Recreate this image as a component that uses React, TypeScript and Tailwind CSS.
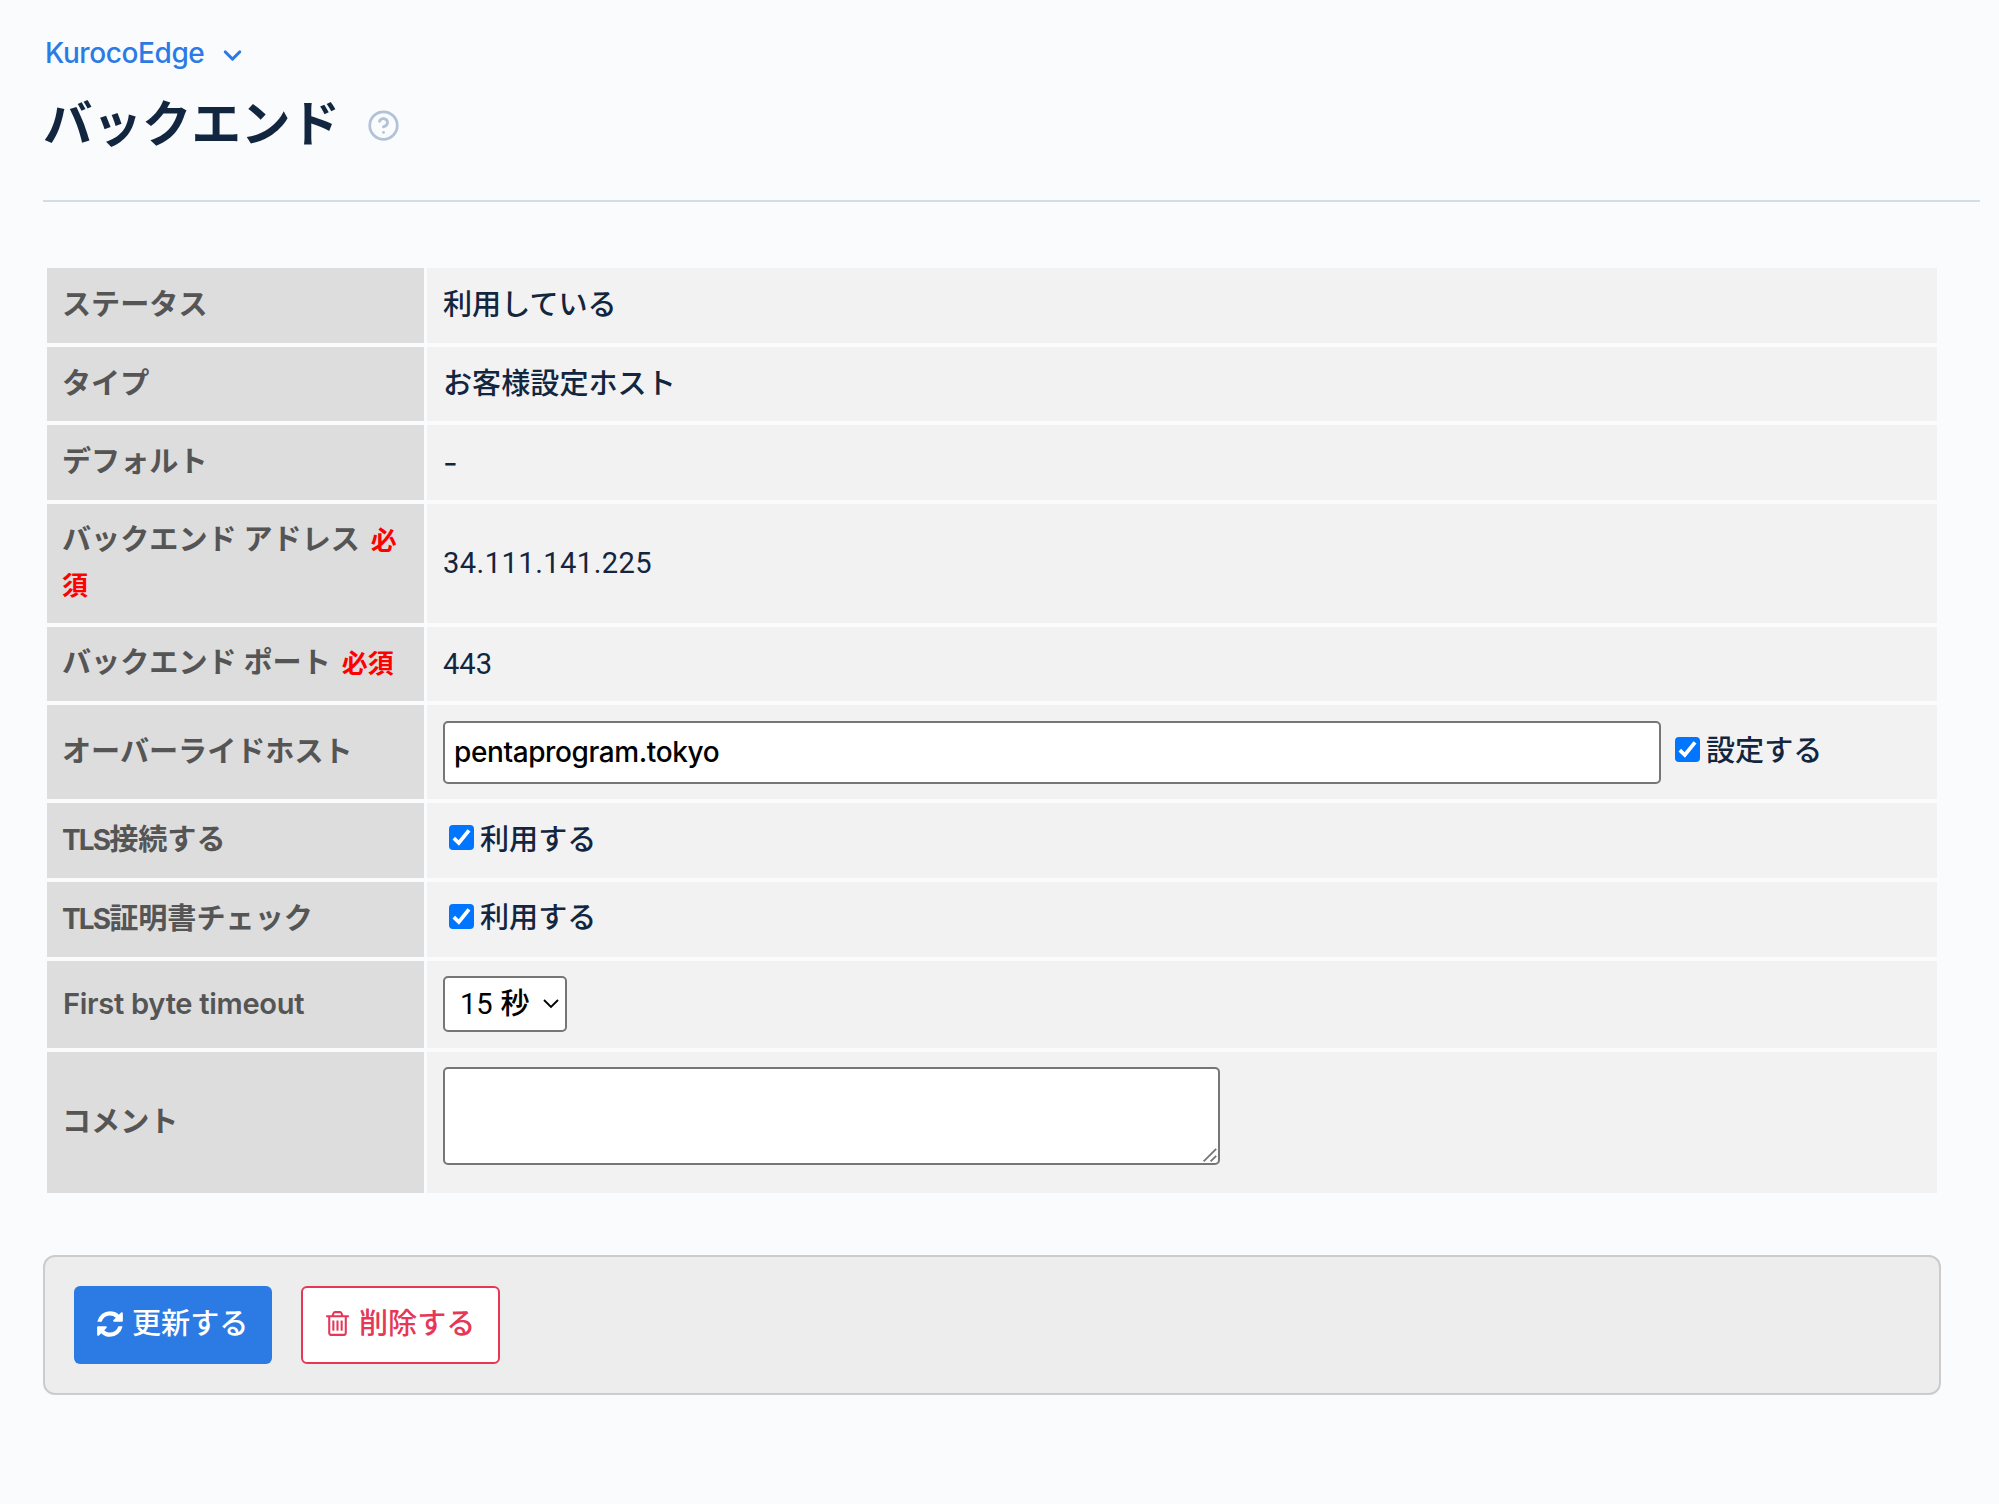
import type { ReactNode } from "react";
import { ChevronDown, CircleHelp } from "lucide-react";

const RefreshIcon = () => (
  <svg viewBox="0 0 1792 1792" className="size-[30px]" fill="currentColor">
    <path d="M1639 1056q0 5-1 7-64 268-268 434.5t-478 166.5q-146 0-282.5-55t-243.5-157l-129 129q-19 19-45 19t-45-19-19-45v-448q0-26 19-45t45-19h448q26 0 45 19t19 45-19 45l-137 137q71 66 161 102t187 36q134 0 250-65t186-179q11-17 53-117 8-23 30-23h192q13 0 22.5 9.5t9.5 22.5zm25-800v448q0 26-19 45t-45 19h-448q-26 0-45-19t-19-45 19-45l138-138q-148-137-349-137-134 0-250 65t-186 179q-11 17-53 117-8 23-30 23h-199q-13 0-22.5-9.5t-9.5-22.5v-7q65-268 270-434.5t480-166.5q146 0 284 55.5t245 156.5l130-129q19-19 45-19t45 19 19 45z" />
  </svg>
);

const TrashIcon = () => (
  <svg viewBox="0 0 1792 1792" className="size-[29px]" fill="currentColor">
    <path d="M704 736v576q0 14-9 23t-23 9h-64q-14 0-23-9t-9-23v-576q0-14 9-23t23-9h64q14 0 23 9t9 23zm256 0v576q0 14-9 23t-23 9h-64q-14 0-23-9t-9-23v-576q0-14 9-23t23-9h64q14 0 23 9t9 23zm256 0v576q0 14-9 23t-23 9h-64q-14 0-23-9t-9-23v-576q0-14 9-23t23-9h64q14 0 23 9t9 23zm128 724v-948h-896v948q0 22 7 40.5t14.5 27 10.5 8.5h832q3 0 10.5-8.5t14.5-27 7-40.5zm-672-1076h448l-48-117q-7-9-17-11h-317q-10 2-17 11zm928 32v64q0 14-9 23t-23 9h-96v948q0 83-47 143.5t-113 60.5h-832q-66 0-113-58.5t-47-141.5v-952h-96q-14 0-23-9t-9-23v-64q0-14 9-23t23-9h309l70-167q15-37 54-63t79-26h320q40 0 79 26t54 63l70 167h309q14 0 23 9t9 23z" />
  </svg>
);

const Required = () => (
  <span className="ml-1 text-[26px] text-[#ff0000]">必須</span>
);

const Tls = () => <span className="text-[28px] tracking-[-1.9px]">TLS</span>;

interface ICheckProps {
  label: string;
  className?: string;
}

const Check = ({ label, className = "" }: ICheckProps) => (
  <label className={`flex items-center ${className}`}>
    <span className="relative mr-[6px] mb-[6px] size-[25px] shrink-0">
      <input
        type="checkbox"
        defaultChecked
        className="peer block size-full appearance-none rounded-[4px] border-2 border-[#767676] bg-white checked:border-[#0075ff] checked:bg-[#0075ff]"
      />
      <svg
        viewBox="0 0 25 25"
        className="pointer-events-none absolute inset-0 hidden size-full peer-checked:block"
        fill="none"
        stroke="white"
        strokeWidth="3.8"
      >
        <path d="M4.8 13.2l5 4.8L20 5.4" />
      </svg>
    </span>
    <span className="pb-[2px]">{label}</span>
  </label>
);

interface IRowProps {
  label: ReactNode;
  height: string;
  children?: ReactNode;
}

const Row = ({ label, height, children }: IRowProps) => (
  <div className={`flex gap-[3px] ${height}`}>
    <div className="flex w-[377px] shrink-0 items-center bg-[#dddddd] pr-4 pb-px pl-[15px] font-bold text-[#555555]">
      <div>{label}</div>
    </div>
    <div className="flex flex-1 items-center bg-[#f2f2f2] px-4">{children}</div>
  </div>
);

const App = () => {
  return (
    <div className="min-h-[1504px] bg-[#fafbfd] pt-[31px] pl-[43px] font-['Inter','Noto_Sans_CJK_JP',sans-serif] text-[29.1px] leading-[44px] font-medium text-[#12263f]">
      <header className="mr-[19px] h-[171px] border-b-2 border-[#d2ddec]">
        <div className="flex items-center pl-[2px] text-[#2c7be5]">
          <span className="text-[28px] tracking-[-0.4px]">KurocoEdge</span>
          <ChevronDown
            className="mt-1 ml-[14px] size-[29px]"
            strokeWidth={2.4}
          />
        </div>
        <div className="mt-[14px] flex items-center">
          <h1 className="text-[49.5px] leading-[70px] font-bold">
            バックエンド
          </h1>
          <CircleHelp
            className="mt-[3px] ml-[27px] size-[33px] text-[#b1c2d9]"
            strokeWidth={2}
          />
        </div>
      </header>

      <section className="mt-[66px] mr-[62px] ml-1 flex flex-col gap-1">
        <Row label="ステータス" height="h-[74.7px]">
          <span className="pb-px">利用している</span>
        </Row>
        <Row label="タイプ" height="h-[74.7px]">
          <span className="pb-px">お客様設定ホスト</span>
        </Row>
        <Row label="デフォルト" height="h-[74.7px]">
          <span className="text-[32px] font-normal">-</span>
        </Row>
        <Row
          label={
            <>
              バックエンド アドレス <Required />
            </>
          }
          height="h-[118.5px]"
        >
          <span className="font-['Roboto'] font-normal tracking-[0.45px]">
            34.111.141.225
          </span>
        </Row>
        <Row
          label={
            <>
              バックエンド ポート <Required />
            </>
          }
          height="h-[74.7px]"
        >
          <span className="font-['Roboto'] font-normal">443</span>
        </Row>
        <Row label="オーバーライドホスト" height="h-[94px]">
          <input
            type="text"
            defaultValue="pentaprogram.tokyo"
            className="h-[63px] w-[1218px] rounded-[5px] border-2 border-[#767676] bg-white px-[9px] text-[28px] tracking-[-0.4px] text-black"
          />
          <Check label="設定する" className="ml-[14px]" />
        </Row>
        <Row
          label={
            <>
              <Tls />
              接続する
            </>
          }
          height="h-[74.7px]"
        >
          <Check label="利用する" className="ml-[6px]" />
        </Row>
        <Row
          label={
            <>
              <Tls />
              証明書チェック
            </>
          }
          height="h-[74.7px]"
        >
          <Check label="利用する" className="ml-[6px]" />
        </Row>
        <Row
          label={
            <span className="pl-px font-semibold tracking-[-0.3px]">
              First byte timeout
            </span>
          }
          height="h-[87.5px]"
        >
          <button
            type="button"
            className="flex h-[56px] w-[124px] items-center rounded-[5px] border-2 border-[#767676] bg-white pl-[15px] text-black"
          >
            <span className="shrink-0">
              <span className="font-['Roboto'] font-normal">15</span> 秒
            </span>
            <svg
              viewBox="0 0 16 10"
              className="ml-[13px] h-[10px] w-4 shrink-0"
              fill="none"
              stroke="currentColor"
              strokeWidth="1.8"
            >
              <path d="M1 1l7 7 7-7" />
            </svg>
          </button>
        </Row>
        <Row label="コメント" height="h-[141px]">
          <div className="relative mb-[13px] h-[98px] w-[777px]">
            <textarea className="block size-full resize-none rounded-[5px] border-2 border-[#767676] bg-white" />
            <svg
              viewBox="0 0 14 14"
              className="pointer-events-none absolute right-[3px] bottom-[3px] size-[14px]"
              fill="none"
              stroke="#767676"
              strokeWidth="1.8"
            >
              <path d="M0.6 13.4L13.2 0.8M7.6 13.4L13.2 7.8" />
            </svg>
          </div>
        </Row>
      </section>

      <footer className="mt-[62px] mr-[58px] flex h-[140px] items-center gap-[29px] rounded-xl border-2 border-[#cccccc] bg-[#ededed] pl-[29px]">
        <button
          type="button"
          className="flex h-[78px] w-[198px] items-center gap-[7px] rounded-[6px] bg-[#2c7be5] pb-[3px] pl-[21px] text-white"
        >
          <RefreshIcon />
          更新する
        </button>
        <button
          type="button"
          className="flex h-[78px] w-[199px] items-center gap-[7px] rounded-[6px] border-2 border-[#e63757] bg-white pb-[3px] pl-[20px] text-[#e63757]"
        >
          <TrashIcon />
          削除する
        </button>
      </footer>
    </div>
  );
};

export default App;
